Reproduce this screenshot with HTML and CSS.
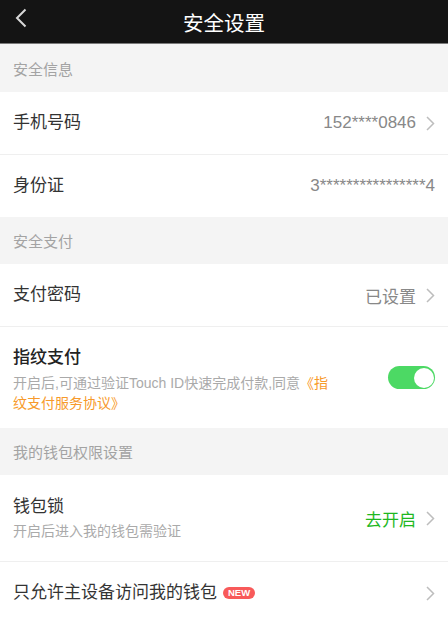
FILE: index.html
```html
<!DOCTYPE html>
<html lang="zh-CN">
<head>
    <meta charset="UTF-8">
    <meta name="viewport" content="width=device-width, initial-scale=1.0">
    <title>安全设置</title>
    <link rel="stylesheet" href="styles.css">
</head>
<body>
    <header class="nav-bar">
        <a class="back" href="#">
            <svg width="12" height="20" viewBox="0 0 12 20"><polyline points="10.5,1.5 2,10 10.5,18.5" fill="none" stroke="#d8d8d8" stroke-width="2"/></svg>
        </a>
        <h1>安全设置</h1>
    </header>

    <div class="section-title">安全信息</div>
    <div class="cell-group">
        <div class="cell">
            <span class="cell-title">手机号码</span>
            <span class="cell-value">152****0846</span>
            <svg class="arrow" width="9" height="15" viewBox="0 0 9 15"><polyline points="1,1 7.5,7.5 1,14" fill="none" stroke="#bdbdbd" stroke-width="1.5"/></svg>
        </div>
        <div class="cell">
            <span class="cell-title">身份证</span>
            <span class="cell-value">3****************4</span>
        </div>
    </div>

    <div class="section-title">安全支付</div>
    <div class="cell-group">
        <div class="cell">
            <span class="cell-title">支付密码</span>
            <span class="cell-value">已设置</span>
            <svg class="arrow" width="9" height="15" viewBox="0 0 9 15"><polyline points="1,1 7.5,7.5 1,14" fill="none" stroke="#bdbdbd" stroke-width="1.5"/></svg>
        </div>
        <div class="cell cell-touch">
            <div class="cell-body">
                <div class="cell-title strong">指纹支付</div>
                <p class="cell-desc">开启后,可通过验证Touch ID快速完成付款,同意<a href="#">《指纹支付服务协议》</a></p>
            </div>
            <label class="switch">
                <input type="checkbox" checked>
                <span class="slider"></span>
            </label>
        </div>
    </div>

    <div class="section-title">我的钱包权限设置</div>
    <div class="cell-group">
        <div class="cell cell-lock">
            <div class="cell-body">
                <div class="cell-title">钱包锁</div>
                <p class="cell-desc">开启后进入我的钱包需验证</p>
            </div>
            <span class="cell-value green">去开启</span>
            <svg class="arrow" width="9" height="15" viewBox="0 0 9 15"><polyline points="1,1 7.5,7.5 1,14" fill="none" stroke="#bdbdbd" stroke-width="1.5"/></svg>
        </div>
        <div class="cell">
            <span class="cell-title">只允许主设备访问我的钱包</span>
            <span class="badge">NEW</span>
            <span class="cell-value"></span>
            <svg class="arrow" width="9" height="15" viewBox="0 0 9 15"><polyline points="1,1 7.5,7.5 1,14" fill="none" stroke="#bdbdbd" stroke-width="1.5"/></svg>
        </div>
    </div>
</body>
</html>
```

FILE: styles.css
```css
body {
    margin: 0;
    font-family: "Liberation Sans", "Noto Sans CJK SC", sans-serif;
    background-color: #f4f4f4;
    color: #333;
}
.nav-bar {
    height: 43px;
    background-color: #141414;
    border-bottom: 1px solid #7a7a7a;
    display: flex;
    align-items: center;
    justify-content: center;
    position: relative;
}
.nav-bar h1 {
    margin: 0;
    color: #fff;
    font-size: 20.5px;
    font-weight: normal;
}
.back {
    position: absolute; /* 左上の戻るボタン */
    left: 15px;
    top: 8px;
    display: flex;
}
.section-title {
    height: 47px;
    padding: 0 13px;
    display: flex;
    align-items: center;
    font-size: 15px;
    color: #a3a3a3;
}
.section-title:first-of-type {
    height: 48px;
}
.cell-group {
    background-color: #fff;
}
.cell {
    height: 62px;
    padding: 0 13px;
    display: flex;
    align-items: center;
    box-sizing: border-box;
}
.cell + .cell {
    border-top: 1px solid #efefef;
    height: 63px;
}
.cell-title {
    font-size: 17px;
    line-height: 24px;
    color: #333;
}
.cell-title.strong {
    color: #222;
    font-weight: 500;
}
.cell-value {
    margin-left: auto;
    font-size: 17px;
    color: #888;
}
.cell-value.green {
    color: #1fb81f;
}
.arrow {
    margin-left: 10px;
    flex-shrink: 0;
}
.cell-body {
    flex: 1;
}
.cell-desc {
    margin: 2px 0 0;
    font-size: 14px;
    line-height: 20px;
    color: #aaa;
}
.cell-touch.cell {
    height: 102px;
    align-items: flex-start;
    padding-top: 19px;
}
.cell-touch .cell-body {
    flex: none;
    width: 320px;
}
.cell-touch .cell-desc {
    margin-top: 3px;
}
.cell-desc a {
    color: #f79a2b;
    text-decoration: none;
}
.cell-lock.cell {
    height: 86px;
}
.switch {
    margin-left: auto;
    margin-top: 20px;
    position: relative;
    width: 47px;
    height: 23px;
}
.switch input {
    display: none;
}
.slider {
    position: absolute;
    inset: 0;
    background-color: #4cd964;
    border-radius: 12px;
}
.slider::after {
    content: "";
    position: absolute;
    right: 1.5px;
    top: 1.5px;
    width: 20px;
    height: 20px;
    border-radius: 50%;
    background-color: #fff;
}
.badge {
    margin-left: 6px;
    padding: 0 5px;
    height: 12px;
    line-height: 12px;
    border-radius: 6px;
    background-color: #f85a5a;
    color: #fff;
    font-size: 9.5px;
    font-weight: bold;
}
```
